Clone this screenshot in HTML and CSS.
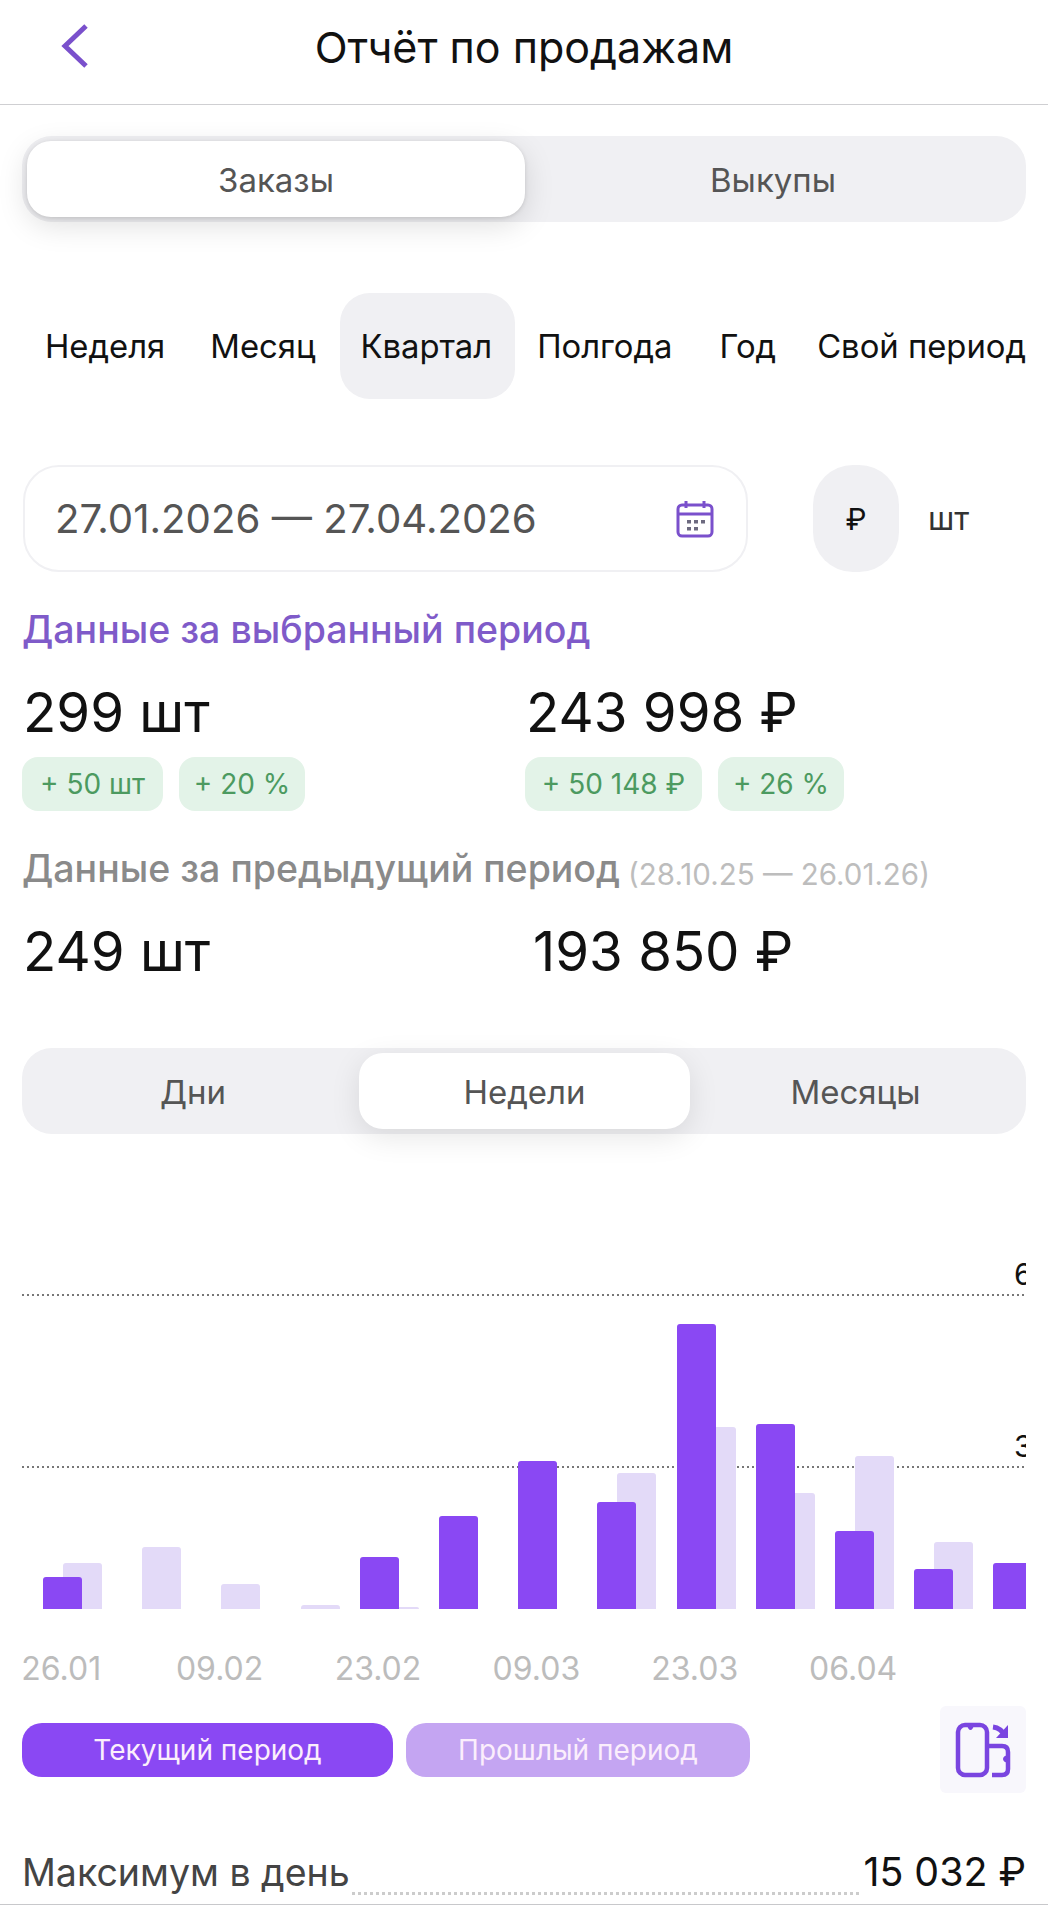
FILE: index.html
```html
<!DOCTYPE html>
<html lang="ru">
<head>
    <meta charset="UTF-8">
    <meta name="viewport" content="width=device-width, initial-scale=1.0">
    <title>Отчёт по продажам</title>
    <link rel="stylesheet" href="styles.css">
</head>
<body>
    <header class="top-bar">
        <svg class="back-icon" width="30" height="46" viewBox="0 0 30 46" fill="none">
            <path d="M26 3 L5 23 L26 43" stroke="#7a50cc" stroke-width="5"/>
        </svg>
        <h1 class="top-title">Отчёт по продажам</h1>
    </header>

    <main class="page">
        <div class="segment segment-two">
            <div class="segment-item active">Заказы</div>
            <div class="segment-item">Выкупы</div>
        </div>

        <nav class="periods">
            <span class="period p-week">Неделя</span>
            <span class="period p-month">Месяц</span>
            <span class="period p-quarter active">Квартал</span>
            <span class="period p-half">Полгода</span>
            <span class="period p-year">Год</span>
            <span class="period p-custom">Свой период</span>
        </nav>

        <div class="filter-row">
            <div class="date-field">
                <span>27.01.2026 — 27.04.2026</span>
                <svg width="38" height="38" viewBox="0 0 38 38" fill="none">
                    <rect x="2" y="5" width="34" height="31" rx="4" stroke="#7a50cc" stroke-width="3"/>
                    <path d="M2 14 H36" stroke="#7a50cc" stroke-width="3"/>
                    <path d="M10 1 V8 M28 1 V8" stroke="#7a50cc" stroke-width="3"/>
                    <path d="M11 20 h4 v3.5 h-4 z M18 20 h4 v3.5 h-4 z M25 20 h4 v3.5 h-4 z M11 27 h4 v3.5 h-4 z M18 27 h4 v3.5 h-4 z" fill="#6d6a80"/>
                </svg>
            </div>
            <div class="unit-pill">₽</div>
            <div class="unit-text">шт</div>
        </div>

        <h2 class="section-title current">Данные за выбранный период</h2>
        <div class="stats">
            <div class="stat">
                <div class="stat-value">299 шт</div>
                <div class="chips">
                    <span class="chip chip-units">+ 50 шт</span>
                    <span class="chip chip-percent">+ 20 %</span>
                </div>
            </div>
            <div class="stat">
                <div class="stat-value">243 998 ₽</div>
                <div class="chips">
                    <span class="chip chip-money">+ 50 148 ₽</span>
                    <span class="chip chip-percent">+ 26 %</span>
                </div>
            </div>
        </div>

        <h2 class="section-title previous">Данные за предыдущий период <small>(28.10.25 — 26.01.26)</small></h2>
        <div class="stats">
            <div class="stat"><div class="stat-value">249 шт</div></div>
            <div class="stat"><div class="stat-value shifted">193 850 ₽</div></div>
        </div>

        <div class="segment segment-three">
            <div class="segment-item">Дни</div>
            <div class="segment-item active">Недели</div>
            <div class="segment-item">Месяцы</div>
        </div>

        <section class="chart">
            <div class="grid-line line-top"><span>6</span></div>
            <div class="grid-line line-mid"><span>3</span></div>
            <div class="bars">
                <div class="bar-group"><i class="bar main" style="height:32px"></i><i class="bar prev" style="height:46px"></i></div>
                <div class="bar-group"><i class="bar main" style="height:0"></i><i class="bar prev" style="height:62px"></i></div>
                <div class="bar-group"><i class="bar main" style="height:0"></i><i class="bar prev" style="height:25px"></i></div>
                <div class="bar-group"><i class="bar main" style="height:0"></i><i class="bar prev" style="height:4px"></i></div>
                <div class="bar-group"><i class="bar main" style="height:52px"></i><i class="bar prev" style="height:2px"></i></div>
                <div class="bar-group"><i class="bar main" style="height:93px"></i></div>
                <div class="bar-group"><i class="bar main" style="height:148px"></i></div>
                <div class="bar-group"><i class="bar main" style="height:107px"></i><i class="bar prev" style="height:136px"></i></div>
                <div class="bar-group"><i class="bar main" style="height:285px"></i><i class="bar prev" style="height:182px"></i></div>
                <div class="bar-group"><i class="bar main" style="height:185px"></i><i class="bar prev" style="height:116px"></i></div>
                <div class="bar-group"><i class="bar main" style="height:78px"></i><i class="bar prev" style="height:153px"></i></div>
                <div class="bar-group"><i class="bar main" style="height:40px"></i><i class="bar prev" style="height:67px"></i></div>
                <div class="bar-group"><i class="bar main" style="height:46px"></i></div>
            </div>
        </section>

        <div class="axis">
            <span>26.01</span>
            <span>09.02</span>
            <span>23.02</span>
            <span>09.03</span>
            <span>23.03</span>
            <span>06.04</span>
        </div>

        <div class="legend">
            <span class="legend-btn now">Текущий период</span>
            <span class="legend-btn past">Прошлый период</span>
            <div class="rotate-tile">
                <svg width="56" height="56" viewBox="0 0 56 56" fill="none" stroke="#7a45e0" stroke-width="4.5">
                    <rect x="3" y="3" width="29" height="50" rx="7"/>
                    <path d="M13 3 q1 4 2.5 4 q1.5 0 2.5 -4" fill="#7a45e0" stroke-width="2"/>
                    <path d="M32 24 H47 q6 0 6 6 V47 q0 6 -6 6 H37"/>
                    <path d="M53 34 q-4 1 -4 3 q0 2 4 3" fill="#7a45e0" stroke-width="2"/>
                    <path d="M38 5 Q46 6 50 14" stroke-width="5"/>
                    <path d="M53 3 V16 H41" stroke-width="0" fill="#7a45e0"/>
                </svg>
            </div>
        </div>

        <div class="total-row">
            <span>Максимум в день</span>
            <i class="leader"></i>
            <b>15 032 ₽</b>
        </div>
    </main>
</body>
</html>
```

FILE: styles.css
```css
* {
    margin: 0;
    padding: 0;
    box-sizing: border-box;
}

body {
    font-family: 'Inter', 'Liberation Sans', sans-serif;
    background: #fff;
    color: #111;
    overflow: hidden;
}

.top-bar {
    height: 105px;
    border-bottom: 1px solid #cfcfd2;
    display: flex;
    align-items: center;
    justify-content: center;
    position: relative;
}

.back-icon {
    position: absolute;
    left: 60px;
    top: 23px;
}

.top-title {
    font-size: 43px;
    font-weight: 400;
    padding-bottom: 10px;
}

.page {
    padding: 31px 22px 0;
}

.segment {
    background: #f0f0f3;
    border-radius: 30px;
    height: 86px;
    display: flex;
    padding: 5px;
    color: #555;
    font-size: 33px;
}

.segment-item {
    display: flex;
    align-items: center;
    justify-content: center;
    flex: 1;
    padding-top: 2px;
}

.segment-two .segment-item:last-child {
    flex: 0 0 496px;
}

.segment-two .active {
    flex: 0 0 498px;
}

.segment .active {
    background: #fff;
    border-radius: 24px;
    box-shadow: 0 8px 30px rgba(0, 0, 0, 0.13), 0 1px 4px rgba(0, 0, 0, 0.12);
}

.segment-three .segment-item:nth-child(1) {
    flex: 0 0 332px;
}

.segment-three .active {
    flex: 0 0 331px;
    box-shadow: 0 8px 30px rgba(0, 0, 0, 0.1);
}

.periods {
    display: flex;
    height: 106px;
    margin-top: 71px;
    font-size: 32.8px;
    align-items: center;
}

.period {
    display: flex;
    align-items: center;
    height: 100%;
    white-space: nowrap;
}

.p-week { margin-left: 23px; }
.p-month { margin-left: 45px; }
.p-quarter {
    margin-left: 24px;
    padding: 0 23px 0 21px;
    background: #f0f0f3;
    border-radius: 30px;
}
.p-half { margin-left: 22px; }
.p-year { margin-left: 47px; }
.p-custom { margin-left: 41px; }

.filter-row {
    display: flex;
    align-items: center;
    margin-top: 66px;
}

.date-field {
    width: 725px;
    height: 107px;
    border: 2px solid #f0f0f3;
    border-radius: 36px;
    display: flex;
    align-items: center;
    justify-content: space-between;
    padding: 0 32px 0 30px;
    font-size: 40.2px;
    color: #555;
    margin-left: 1px;
}

.unit-pill {
    width: 86px;
    height: 107px;
    margin-left: 65px;
    background: #f0f0f3;
    border-radius: 40px;
    display: flex;
    align-items: center;
    justify-content: center;
    font-size: 30px;
}

.unit-text {
    margin-left: 29px;
    font-size: 32px;
    color: #333;
}

.section-title {
    font-weight: 500;
    font-size: 37.5px;
    line-height: 44px;
}

.section-title.current {
    color: #7f5bc9;
    margin-top: 36px;
}

.section-title.previous {
    color: #8a8a8a;
    margin-top: 36px;
}

.section-title small {
    font-size: 29.5px;
    line-height: 1;
    font-weight: 400;
    color: #bdbdbd;
    margin-left: -2px;
    vertical-align: -3px;
}

.stats {
    display: flex;
    margin-top: 30px;
}

.stat {
    flex: 0 0 503px;
}

.stat-value {
    font-size: 54.6px;
    line-height: 60px;
    padding-left: 1px;
    white-space: nowrap;
}

.stat-value.shifted {
    padding-left: 8px;
}

.chips {
    display: flex;
    gap: 16px;
    margin-top: 15px;
}

.chip {
    height: 54px;
    border-radius: 16px;
    background: #e3f3e8;
    color: #4c9a60;
    font-size: 28px;
    display: flex;
    align-items: center;
    justify-content: center;
    white-space: nowrap;
}

.chip-units { width: 141px; }
.chip-percent { width: 126px; }
.chip-money { width: 177px; }

.segment-three {
    margin-top: 67px;
}

.chart {
    position: relative;
    height: 360px;
    margin-top: 115px;
    overflow: hidden;
    color: #111;
}

.grid-line {
    position: absolute;
    left: 0;
    right: 0;
    height: 2px;
    background: repeating-linear-gradient(90deg, #777 0 2px, transparent 2px 5px);
}

.grid-line span {
    position: absolute;
    left: 992px;
    bottom: 4px;
    font-size: 30px;
    white-space: nowrap;
}

.line-top { top: 45px; }
.line-mid { top: 217px; }

.bars {
    position: relative;
    display: flex;
    align-items: flex-end;
    height: 100%;
    padding-left: 21px;
}

.bar-group {
    flex: 0 0 79.2px;
    display: flex;
    align-items: flex-end;
}

.bar {
    display: block;
    width: 39px;
    border-radius: 3px 3px 0 0;
}

.bar.main {
    background: #8a48f3;
    position: relative;
    z-index: 1;
}

.bar.prev {
    background: #e3daf8;
    margin-left: -19px;
}

.axis {
    display: grid;
    grid-template-columns: repeat(6, 158.4px);
    margin: 40px 0 0 -40px;
    font-size: 32px;
    color: #bcbcbc;
    text-align: center;
}

.legend {
    display: flex;
    align-items: center;
    margin-top: 18px;
    gap: 13px;
}

.legend-btn {
    height: 54px;
    border-radius: 20px;
    display: flex;
    align-items: center;
    justify-content: center;
    font-size: 28px;
    color: #fbeefc;
}

.legend-btn.now {
    width: 371px;
    background: #8a48f3;
}

.legend-btn.past {
    width: 344px;
    background: #c4a5f2;
}

.rotate-tile {
    width: 86px;
    height: 87px;
    margin-left: auto;
    background: #f8f7fc;
    border-radius: 6px;
    display: flex;
    align-items: center;
    justify-content: center;
}

.total-row {
    display: flex;
    align-items: flex-end;
    height: 79px;
    margin: 33px -22px 0;
    padding: 0 22px 9px;
    border-bottom: 1px solid #c8c8cb;
    font-size: 37.5px;
    color: #444;
}

.leader {
    flex: 1;
    height: 3px;
    margin: 0 2px 0;
    background: repeating-linear-gradient(90deg, #ccc 0 3px, transparent 3px 6px);
}

.total-row b {
    font-weight: 400;
    font-size: 39.3px;
    color: #111;
}
```
